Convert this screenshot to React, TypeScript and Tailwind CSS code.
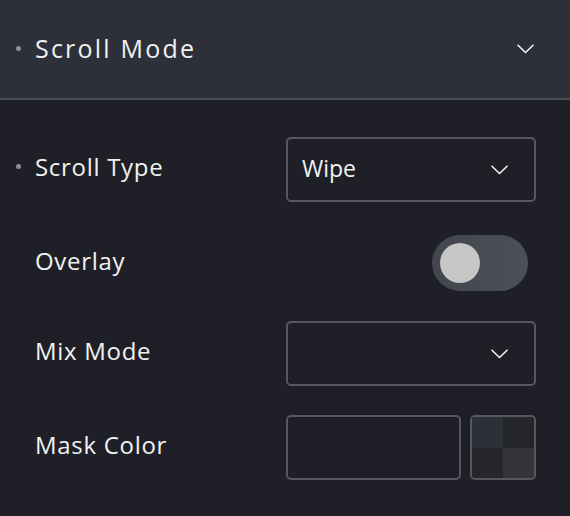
import React from "react";

const FONT = { fontFamily: "'Open Sans', 'Noto Sans', sans-serif" };

function Chevron({ className = "" }: { className?: string }) {
  return (
    <svg width="17" height="10" viewBox="0 0 17 10" fill="none" className={className}>
      <path d="M1 1.2 L8.5 8.5 L16 1.2" stroke="#f2f2f2" strokeWidth="1.6" strokeLinecap="round" strokeLinejoin="round" />
    </svg>
  );
}

function Label({ text, dot }: { text: string; dot?: boolean }) {
  return (
    <div className="relative flex items-center pb-[5px] pl-[35px] text-[24px] tracking-[0.7px] text-[#f1f1f2]">
      {dot && <span className="absolute left-[16px] top-[15px] h-[5px] w-[5px] rounded-full bg-[#8c8f96]" />}
      {text}
    </div>
  );
}

function Select({ value }: { value?: string }) {
  return (
    <div className="flex h-[65px] w-[250px] items-center justify-between rounded-[5px] border-2 border-[#55585f] pl-[14px] pr-[26px] text-[23px] text-[#f1f1f2]">
      <span className="pb-[3px]">{value}</span>
      <Chevron />
    </div>
  );
}

export default function App() {
  return (
    <div className="h-[516px] w-[570px] overflow-hidden bg-[#1f2027]" style={FONT}>
      <div className="flex h-[100px] items-center justify-between border-b-2 border-[#4b4e57] bg-[#2d3039] pr-[36px]">
        <div className="relative flex items-center pl-[35px] text-[25px] tracking-[2.2px] text-[#f1f1f2]">
          <span className="absolute left-[16px] top-[16px] h-[5px] w-[5px] rounded-full bg-[#8c8f96]" />
          Scroll Mode
        </div>
        <Chevron />
      </div>

      <div className="flex flex-col pt-[37px] pr-[34px]">
        <div className="flex h-[65px] items-center justify-between">
          <Label text="Scroll Type" dot />
          <Select value="Wipe" />
        </div>

        <div className="mt-[33px] flex h-[56px] items-center justify-between pr-[8px]">
          <Label text="Overlay" />
          <div className="flex h-[56px] w-[96px] items-center rounded-full bg-gradient-to-r from-[#42454c] to-[#4d5058] pl-[8px]">
            <div className="h-[40px] w-[40px] rounded-full bg-[#c6c6c6]" />
          </div>
        </div>

        <div className="mt-[30px] flex h-[65px] items-center justify-between">
          <Label text="Mix Mode" />
          <Select />
        </div>

        <div className="mt-[29px] flex h-[65px] items-center justify-between">
          <Label text="Mask Color" />
          <div className="flex gap-[9px]">
            <div className="h-[65px] w-[175px] rounded-[5px] border-2 border-[#55585f]" />
            <div className="grid h-[65px] w-[66px] grid-cols-2 grid-rows-2 overflow-hidden rounded-[5px] border-2 border-[#55585f]">
              <div className="bg-[#2e3038]" />
              <div className="bg-[#24262b]" />
              <div className="bg-[#25272c]" />
              <div className="bg-[#33353b]" />
            </div>
          </div>
        </div>
      </div>
    </div>
  );
}
